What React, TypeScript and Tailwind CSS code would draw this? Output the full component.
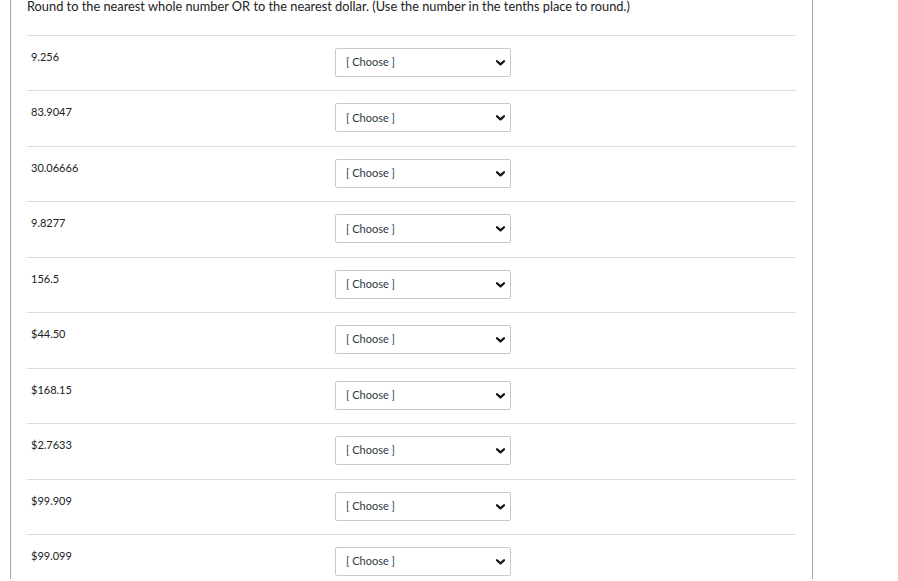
import React from 'react';

const values = [
  '9.256',
  '83.9047',
  '30.06666',
  '9.8277',
  '156.5',
  '$44.50',
  '$168.15',
  '$2.7633',
  '$99.909',
  '$99.099',
];

function ChooseSelect() {
  return (
    <div className="relative w-[176px]">
      <select
        defaultValue=""
        className="block h-[29px] w-full appearance-none rounded-[2px] border border-[#c9c9c9] bg-white pl-[10px] pr-6 text-[11px] text-[#2d3b45] outline-none"
      >
        <option value="">[ Choose ]</option>
      </select>
      <svg
        className="pointer-events-none absolute right-[6px] top-[12px]"
        width="9"
        height="6"
        viewBox="0 0 9 6"
        fill="none"
      >
        <path d="M1 1.2l3.5 3.2L8 1.2" stroke="#111" strokeWidth="2.2" strokeLinecap="round" strokeLinejoin="round" />
      </svg>
    </div>
  );
}

export default function App() {
  return (
    <div
      className="h-[581px] overflow-hidden bg-white text-[#2d3b45]"
      style={{ fontFamily: 'Lato, "Open Sans", sans-serif' }}
    >
      <div className="ml-[10px] h-full w-[803px] border-x border-[#a6a6a6] pl-[16px] pr-[15px]">
        {/* question text */}
        <p className="-mt-[2px] pb-[21px] text-[12.8px] leading-[16px] text-[#222]">
          Round to the nearest whole number OR to the nearest dollar. (Use the number in the tenths place to round.)
        </p>

        <div className="w-[769px]">
          {values.map((v) => (
            <div key={v} className="flex h-[55.44px] border-t border-[#dcdcdc]">
              <div className="w-[308px] pl-[4px] pt-[13px] text-[11px] leading-[16px] text-[#222]">{v}</div>
              <div className="pt-[12px]">
                <ChooseSelect />
              </div>
            </div>
          ))}
        </div>
      </div>
    </div>
  );
}
